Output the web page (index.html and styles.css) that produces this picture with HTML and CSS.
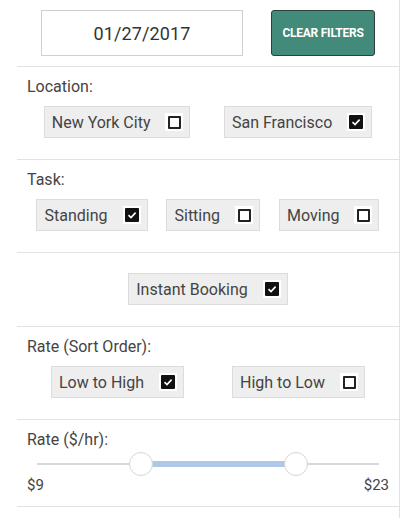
FILE: index.html
```html
<!DOCTYPE html>
<html>
<head>
<meta charset="utf-8">
<link rel="stylesheet" href="styles.css">
</head>
<body>
<div class="panel">
  <div class="top">
    <div class="date">01/27/2017</div>
    <button class="clear">CLEAR FILTERS</button>
  </div>

  <div class="section">
    <div class="label">Location:</div>
    <div class="row">
      <div class="chip"><span>New York City</span><span class="cb"><span class="box"></span></span></div>
      <div class="chip"><span>San Francisco</span><span class="cb"><span class="box on"><svg viewBox="0 0 14 14"><path d="M3.5 7.2 L6 9.6 L10.6 4.6" fill="none" stroke="#fff" stroke-width="1.6"/></svg></span></span></div>
    </div>
  </div>

  <div class="section">
    <div class="label">Task:</div>
    <div class="row">
      <div class="chip"><span>Standing</span><span class="cb"><span class="box on"><svg viewBox="0 0 14 14"><path d="M3.5 7.2 L6 9.6 L10.6 4.6" fill="none" stroke="#fff" stroke-width="1.6"/></svg></span></span></div>
      <div class="chip"><span>Sitting</span><span class="cb"><span class="box"></span></span></div>
      <div class="chip"><span>Moving</span><span class="cb"><span class="box"></span></span></div>
    </div>
  </div>

  <div class="section single">
    <div class="row">
      <div class="chip"><span>Instant Booking</span><span class="cb"><span class="box on"><svg viewBox="0 0 14 14"><path d="M3.5 7.2 L6 9.6 L10.6 4.6" fill="none" stroke="#fff" stroke-width="1.6"/></svg></span></span></div>
    </div>
  </div>

  <div class="section">
    <div class="label">Rate (Sort Order):</div>
    <div class="row">
      <div class="chip"><span>Low to High</span><span class="cb"><span class="box on"><svg viewBox="0 0 14 14"><path d="M3.5 7.2 L6 9.6 L10.6 4.6" fill="none" stroke="#fff" stroke-width="1.6"/></svg></span></span></div>
      <div class="chip"><span>High to Low</span><span class="cb"><span class="box"></span></span></div>
    </div>
  </div>

  <div class="section slider-section">
    <div class="label">Rate ($/hr):</div>
    <div class="slider">
      <div class="track"></div>
      <div class="fill" style="left: 104px; width: 155px;"></div>
      <div class="handle" style="left: 92px;"></div>
      <div class="handle" style="left: 247px;"></div>
    </div>
    <div class="range">
      <span>$9</span>
      <span>$23</span>
    </div>
  </div>
</div>
</body>
</html>
```

FILE: styles.css
```css
html, body {
  margin: 0;
  padding: 0;
  background: #fff;
}
body {
  font-family: Roboto, "Liberation Sans", sans-serif;
  color: #444;
}
.panel {
  margin-left: 17px;
  width: 382px;
  min-height: 518px;
  border-right: 1px solid #e2e2e2;
}
.top {
  display: flex;
  justify-content: space-around;
  align-items: center;
  padding: 10px 10px 10px;
  border-bottom: 1px solid #e2e2e2;
}
.date {
  box-sizing: border-box;
  width: 202px;
  height: 46px;
  border: 1px solid #cfcfcf;
  display: flex;
  align-items: center;
  justify-content: center;
  font-size: 18px;
  color: #333;
  letter-spacing: 0.1px;
}
.clear {
  box-sizing: border-box;
  width: 104px;
  height: 46px;
  background: #428a79;
  border: 1px solid #2f3f3a;
  border-radius: 3px;
  color: #fff;
  font-family: Roboto, "Liberation Sans", sans-serif;
  font-weight: 700;
  font-size: 12px;
  letter-spacing: -0.25px;
  padding: 0;
}
.section {
  padding: 10px 10px 21px;
  border-bottom: 1px solid #e2e2e2;
}
.section.single {
  padding-top: 20px;
}
.label {
  font-size: 16px;
  line-height: 19px;
  color: #444;
}
.row {
  display: flex;
  justify-content: space-around;
  margin-top: 10px;
}
.single .row {
  margin-top: 0;
}
.chip {
  display: flex;
  align-items: center;
  box-sizing: border-box;
  height: 32px;
  padding: 0 6px 0 7px;
  background: #eeeeee;
  border: 1px solid #dcdcdc;
  font-size: 16px;
  color: #444;
}
.cb {
  width: 18px;
  height: 18px;
  margin-left: 15px;
  background: #fff;
  display: flex;
  align-items: center;
  justify-content: center;
}
.box {
  box-sizing: border-box;
  width: 13px;
  height: 13px;
  border: 2px solid #222;
  background: #fff;
  border-radius: 1px;
}
.box.on {
  width: 14px;
  height: 14px;
  border: none;
  background: #111;
  display: flex;
}
.box svg {
  width: 14px;
  height: 14px;
}
.slider-section {
  padding-bottom: 11px;
}
.slider {
  position: relative;
  height: 24px;
  margin: 3px 10px 0;
}
.track {
  position: absolute;
  left: 0;
  right: 0;
  top: 11px;
  height: 2px;
  background: #d8d8d8;
}
.fill {
  position: absolute;
  top: 9px;
  height: 6px;
  background: #aec6e8;
}
.handle {
  position: absolute;
  top: 0;
  box-sizing: border-box;
  width: 24px;
  height: 24px;
  border-radius: 50%;
  background: #fff;
  border: 1px solid #d6d6d6;
}
.range {
  display: flex;
  justify-content: space-between;
  font-size: 15px;
  line-height: 19px;
  color: #444;
}
```
